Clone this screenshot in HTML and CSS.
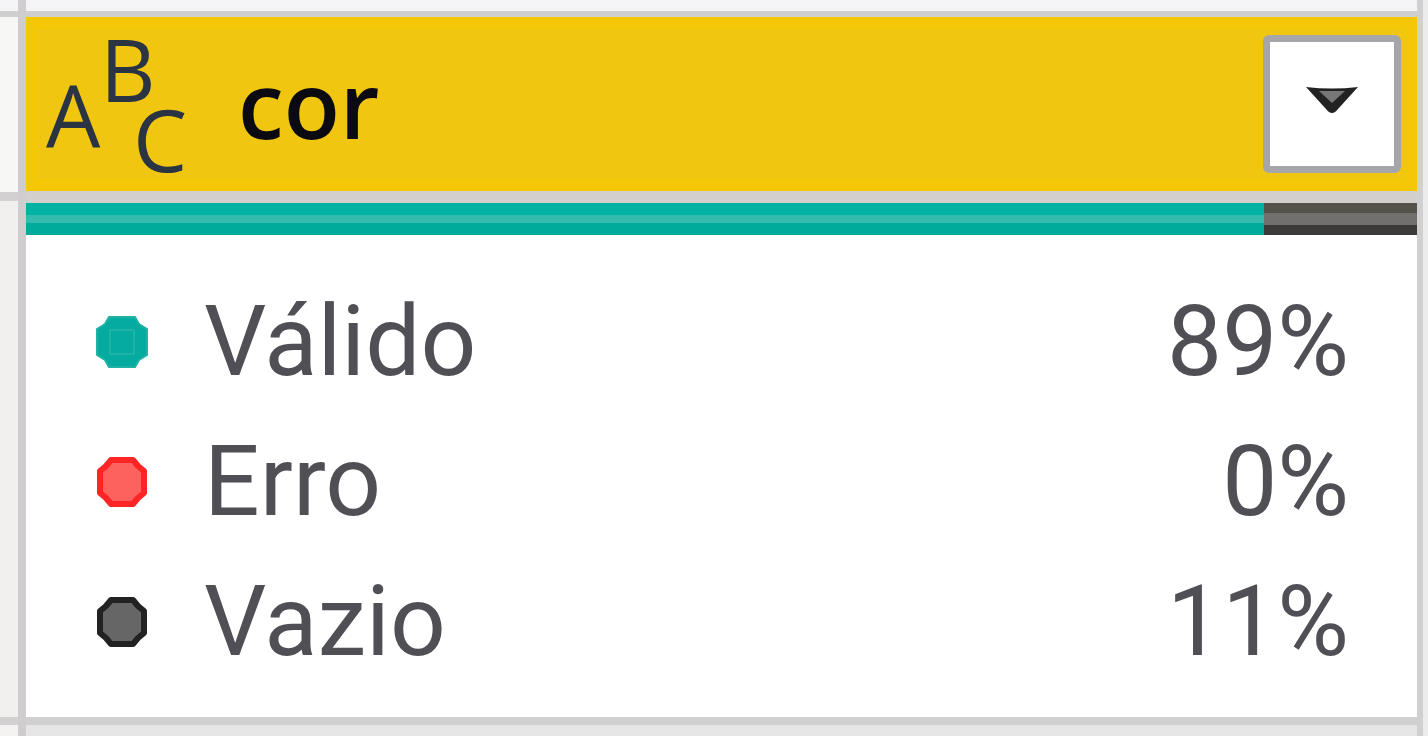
FILE: index.html
```html
<!DOCTYPE html>
<html lang="pt-BR">

<head>
    <meta charset="UTF-8">
    <title>cor</title>
    <link rel="stylesheet" href="styles.css">
</head>

<body>
    <div class="grid">
        <div class="gutter">
            <div class="strip"></div>
            <div class="gutter-head"></div>
            <div class="gutter-body"></div>
            <div class="gutter-foot"></div>
        </div>

        <div class="column">
            <div class="strip"></div>
            <div class="column-head">
                <svg class="type-icon" viewBox="0 0 150 173" aria-hidden="true">
                    <text x="8" y="130">A</text>
                    <text x="62" y="84">B</text>
                    <text x="95" y="154">C</text>
                </svg>
                <span class="column-name">cor</span>
                <button class="filter" type="button" aria-label="Filtrar cor">
                    <svg class="arrow" viewBox="0 0 54 28" aria-hidden="true">
                        <path class="arrow-edge" d="M1 1Q27 4 53 1L33 23Q27 31 21 23Z" />
                        <path class="arrow-fill" d="M14 5H40L27 17Z" />
                    </svg>
                </button>
            </div>
            <div class="quality-bar">
                <div class="bar-valid"></div>
                <div class="bar-empty"></div>
            </div>
            <table class="stats">
                <tr>
                    <td class="mark">
                        <svg class="dot valid" viewBox="0 0 52 52" aria-hidden="true">
                            <path d="M13 1H39L43 8L51 13V39L43 44L39 51H13L9 44L1 39V13L9 8Z" />
                            <rect x="14" y="14" width="24" height="24" />
                        </svg>
                    </td>
                    <th scope="row">Válido</th>
                    <td class="value">89%</td>
                </tr>
                <tr>
                    <td class="mark">
                        <svg class="dot error" viewBox="0 0 52 52" aria-hidden="true">
                            <path d="M15 4H37L42 10L48 15V37L42 42L37 48H15L10 42L4 37V15L10 10Z" />
                        </svg>
                    </td>
                    <th scope="row">Erro</th>
                    <td class="value">0%</td>
                </tr>
                <tr>
                    <td class="mark">
                        <svg class="dot empty" viewBox="0 0 52 52" aria-hidden="true">
                            <path d="M15 4H37L42 10L48 15V37L42 42L37 48H15L10 42L4 37V15L10 10Z" />
                        </svg>
                    </td>
                    <th scope="row">Vazio</th>
                    <td class="value">11%</td>
                </tr>
            </table>
            <div class="column-foot"></div>
        </div>

        <div class="edge"></div>
    </div>
</body>

</html>
```

FILE: styles.css
```css
* {
    box-sizing: border-box;
}

body {
    margin: 0;
    font-family: Roboto, "Liberation Sans", sans-serif;
    color: #4f4f55;
    background-color: #f4f3f2;
}

.grid {
    display: flex;
    min-height: 100vh;
}

.gutter {
    width: 18px;
    display: flex;
    flex-direction: column;
}

.strip {
    height: 17px;
    background-color: #f5f5f7;
    border-bottom: 6px solid #d0cfcf;
}

.gutter-head {
    height: 184px;
    background-color: #f7f7f6;
    border-bottom: 9px solid #d2d0d0;
}

.gutter-body {
    height: 524px;
    background-color: #f1f0ef;
    border-bottom: 8px solid #d2d0d0;
}

.gutter-foot {
    flex: 1;
}

.column {
    flex: 1;
    display: flex;
    flex-direction: column;
    border-left: 8px solid #cfcdcd;
    border-right: 6px solid #d0d0d0;
    background-color: #fff;
}

.column-head {
    display: flex;
    align-items: center;
    height: 174px;
    padding: 0 16px 0 12px;
    background-color: #f0c610;
    box-shadow: inset 0 0 0 12px #f4c707;
}

.type-icon {
    width: 150px;
    height: 173px;
    overflow: visible;
    font-family: "Open Sans", sans-serif;
    font-size: 86px;
    font-weight: 500;
    fill: #2a3443;
}

.column-name {
    flex: 1;
    padding-left: 50px;
    font-family: "Open Sans", sans-serif;
    font-size: 92px;
    font-weight: 600;
    line-height: 120px;
    color: #0b0a10;
}

.filter {
    display: flex;
    align-items: center;
    justify-content: center;
    width: 138px;
    height: 138px;
    padding: 0 0 8px;
    border: 7px solid #a5a5aa;
    border-radius: 6px;
    background-color: #fff;
    cursor: pointer;
}

.arrow {
    width: 54px;
    height: 28px;
}

.arrow-edge {
    fill: #222;
}

.arrow-fill {
    fill: #777;
}

.quality-bar {
    display: flex;
    height: 44px;
    border-top: 12px solid #d3cfcc;
}

.bar-valid {
    width: 89%;
    background: linear-gradient(#00b2a3 12px, #35bbad 12px, #35bbad 20px, #00ab9c 20px);
}

.bar-empty {
    flex: 1;
    background: linear-gradient(#55524a 10px, #72706e 10px, #72706e 22px, #3b3a39 22px);
}

.stats {
    width: 100%;
    margin: 37px 0 25px;
    border-collapse: collapse;
}

.stats tr {
    height: 140px;
}

.stats td,
.stats th {
    padding: 0;
    font-size: 98px;
    font-weight: 400;
    line-height: 140px;
    text-align: left;
}

.stats .mark {
    width: 178px;
    padding-left: 70px;
}

.stats .value {
    padding-right: 68px;
    text-align: right;
}

.dot {
    display: block;
    width: 52px;
    height: 52px;
    stroke-width: 6px;
    stroke-linejoin: round;
}

.valid {
    fill: #05ab9e;
    stroke: #1fb2a5;
    stroke-width: 2px;
}

.error {
    fill: #fd625e;
    stroke: #fe2524;
}

.empty {
    fill: #666;
    stroke: #222;
}

.column-foot {
    flex: 1;
    border-top: 8px solid #d0d0d0;
    background-color: #e7e6e6;
}

.edge {
    width: 5px;
    background-color: #ececec;
}
```
